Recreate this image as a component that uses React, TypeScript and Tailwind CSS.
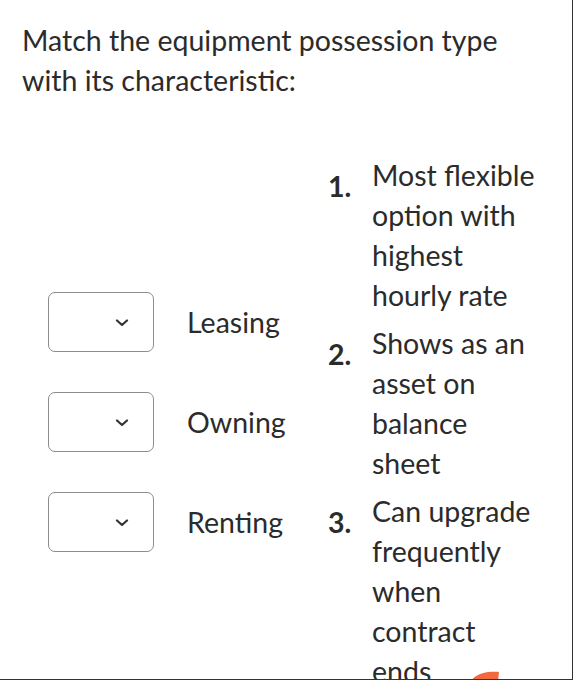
const labels = ["Leasing", "Owning", "Renting"];

const items: string[][] = [
  ["Most flexible", "option with", "highest", "hourly rate"],
  ["Shows as an", "asset on", "balance", "sheet"],
  ["Can upgrade", "frequently", "when", "contract", "ends"],
];

function Dropdown() {
  return (
    <div className="flex h-[60px] w-[106px] items-center justify-end rounded-[7px] border border-[#8c8c8c] bg-white pr-[23px]">
      <svg width="16" height="8" viewBox="0 0 16 8" className="mt-[1px]">
        <polyline points="3,1.5 8,6 13,1.5" fill="none" stroke="#333" strokeWidth="2.2" strokeLinecap="round" strokeLinejoin="round" />
      </svg>
    </div>
  );
}

export default function App() {
  return (
    <div
      className="relative h-[680px] w-[573px] overflow-hidden border-r border-b border-[#333] bg-white text-[28.5px] text-[#2b2b2b]"
      style={{ fontFamily: "Lato, 'Open Sans', sans-serif" }}
    >
      <h1 className="px-[22px] pt-[20px] leading-[40px] font-normal">
        Match the equipment possession type
        <br />
        with its characteristic:
      </h1>

      <div className="mt-[55px] flex pl-[48px]">
        <div className="mt-[137px] flex w-[280px] flex-col gap-[40px]">
          {labels.map((l) => (
            <div key={l} className="flex h-[60px] items-center gap-[33px]">
              <Dropdown />
              <span>{l}</span>
            </div>
          ))}
        </div>

        <ol className="flex flex-col gap-[8px]">
          {items.map((lines, i) => (
            <li key={i} className="flex">
              <span className="mt-[11px] w-[44px] leading-[40px] font-bold">{i + 1}.</span>
              <div className="leading-[40px]">
                {lines.map((t) => (
                  <div key={t}>{t}</div>
                ))}
              </div>
            </li>
          ))}
        </ol>
      </div>

      <svg className="absolute left-[470px] top-[671px]" width="30" height="10" viewBox="0 0 30 10">
        <path d="M1 10 C4 5 10 2 18 1 C23 0.5 27 0.5 29 1 L28 10 Z" fill="#f2683f" />
      </svg>
    </div>
  );
}
